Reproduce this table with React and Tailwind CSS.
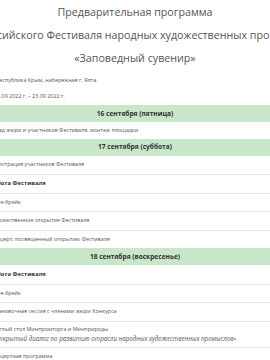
export default function App() {
  const Band = ({ children }) => (
    <div className="h-[17px] bg-[#c8e6c9] flex items-center justify-center font-bold text-[6.6px] text-[#333] whitespace-nowrap">
      {children}
    </div>
  );
  const Row = ({ children, bold, h = "h-[18.5px]", first }) => (
    <div
      className={`${h} flex flex-col justify-center text-[5.4px] leading-[9px] whitespace-nowrap ${first ? "" : "border-t border-[#e8e8e8]"} ${bold ? "font-bold text-[#333] text-[5.8px]" : "text-[#555]"}`}
    >
      {children}
    </div>
  );
  return (
    <div className="w-[270px] h-[360px] overflow-hidden bg-white font-['Open_Sans',sans-serif]">
      <div className="ml-[-10px] w-[290px]">
        <div className="pt-px text-[10.7px] leading-[23px] text-[#555]">
          <div className="flex justify-center whitespace-nowrap">
            <span className="shrink-0">Предварительная программа</span>
          </div>
          <div className="flex justify-center whitespace-nowrap">
            <span className="shrink-0">Всероссийского Фестиваля народных художественных промыслов</span>
          </div>
          <div className="flex justify-center whitespace-nowrap">
            <span className="shrink-0">«Заповедный сувенир»</span>
          </div>
        </div>
        <div className="mt-[4px] pl-[6px] text-[5.4px] leading-[12px] text-[#555] whitespace-nowrap">
          Республика Крым, набережная г. Ялта.
        </div>
        <div className="mt-[4px] pl-[4px] text-[5.4px] leading-[12px] text-[#555] whitespace-nowrap">
          16.09 2022 г. – 23.09 2022 г.
        </div>
        <div className="mt-[3px]">
          <Band>16 сентября (пятница)</Band>
          <Row first h="h-[16.5px]">Заезд жюри и участников Фестиваля, монтаж площадки</Row>
          <Band>17 сентября (суббота)</Band>
          <Row first>Регистрация участников Фестиваля</Row>
          <Row bold>Работа Фестиваля</Row>
          <Row>Кофе-брейк</Row>
          <Row>Художественное открытие Фестиваля</Row>
          <Row>Концерт, посвященный открытию Фестиваля</Row>
          <Band>18 сентября (воскресенье)</Band>
          <Row first bold>Работа Фестиваля</Row>
          <Row>Кофе-брейк</Row>
          <Row>Установочная сессия с членами жюри Конкурса</Row>
          <Row h="h-[26px]">
            <span>Круглый стол Минпромторга и Минприроды</span>
            <span className="italic text-[6.2px]">«Открытый диалог по развитию отрасли народных художественных промыслов»</span>
          </Row>
          <Row>Концертная программа</Row>
        </div>
      </div>
    </div>
  );
}
